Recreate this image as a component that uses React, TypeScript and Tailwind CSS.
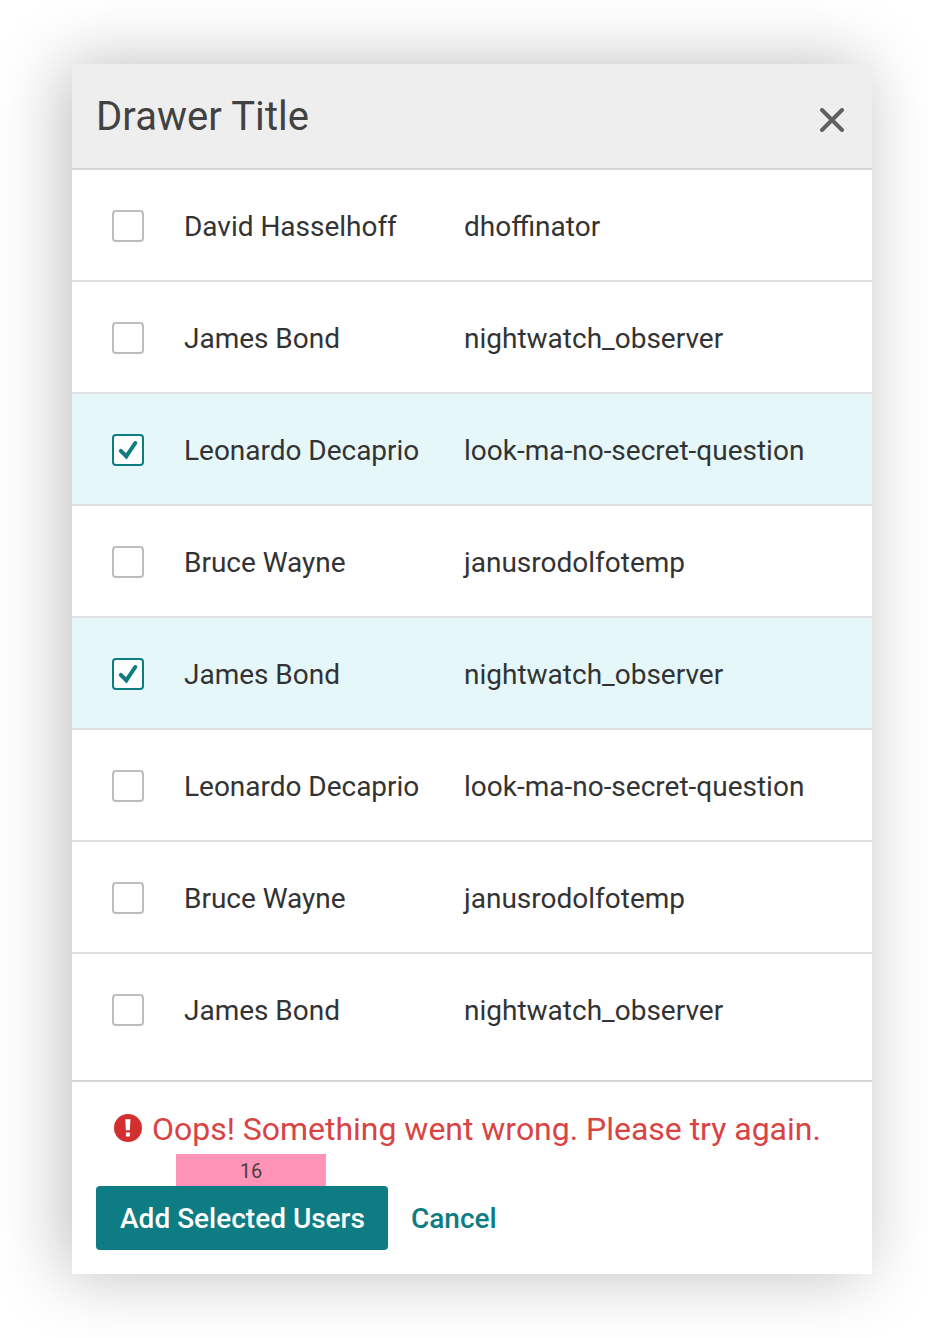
import React from "react";

type User = { name: string; handle: string; checked?: boolean };

const users: User[] = [
  { name: "David Hasselhoff", handle: "dhoffinator" },
  { name: "James Bond", handle: "nightwatch_observer" },
  { name: "Leonardo Decaprio", handle: "look-ma-no-secret-question", checked: true },
  { name: "Bruce Wayne", handle: "janusrodolfotemp" },
  { name: "James Bond", handle: "nightwatch_observer", checked: true },
  { name: "Leonardo Decaprio", handle: "look-ma-no-secret-question" },
  { name: "Bruce Wayne", handle: "janusrodolfotemp" },
  { name: "James Bond", handle: "nightwatch_observer" },
];

function Checkbox({ checked }: { checked?: boolean }) {
  return (
    <span
      role="checkbox"
      aria-checked={!!checked}
      className={`flex size-8 shrink-0 items-center justify-center rounded-[4px] border-2 bg-white ${
        checked ? "border-[#0d7c83]" : "border-[#bdbdbd]"
      }`}
    >
      {checked && (
        <svg width="28" height="28" viewBox="0 0 28 28" fill="none" stroke="#0d7c83" strokeWidth="4" strokeLinecap="round">
          <path d="M6.8 14.9 L12.3 20.3 L21.3 7" />
        </svg>
      )}
    </span>
  );
}

function Row({ user }: { user: User }) {
  return (
    <li
      className={`flex h-28 items-center border-b-2 border-[#e0e0e0] pt-[2px] pl-10 last:border-b-transparent ${
        user.checked ? "bg-[#e5f7f9]" : "bg-white"
      }`}
    >
      <Checkbox checked={user.checked} />
      <span className="ml-10 w-[280px] shrink-0 pt-[2px] text-[28px] tracking-[-0.02px] [font-variant-ligatures:common-ligatures]">{user.name}</span>
      <span className="pt-[2px] text-[28px]">{user.handle}</span>
    </li>
  );
}

export default function App() {
  return (
    <main className="h-[1338px] w-[928px] overflow-hidden bg-white px-[72px] pt-16 font-['Roboto',sans-serif] text-[#333333]">
      <section className="flex h-[1210px] w-[800px] flex-col bg-white whitespace-nowrap shadow-[-8px_0_64px_rgba(0,0,0,0.26)]">
        <header className="flex h-[106px] items-center justify-between border-b-2 border-[#d6d6d6] bg-[#eeeeee] pr-7 pl-6">
          <h1 className="pt-[2px] text-[40px] leading-[48px] tracking-[0.06px] text-[#424242]">Drawer Title</h1>
          <button aria-label="Close" className="mt-2">
            <svg width="24" height="24" viewBox="0 0 24 24" stroke="#616161" strokeWidth="4" strokeLinecap="round">
              <path d="M2 2 L22 22 M22 2 L2 22" />
            </svg>
          </button>
        </header>
        <ul className="flex-1">
          {users.map((user, i) => (
            <Row key={i} user={user} />
          ))}
        </ul>
        <footer className="h-[194px] border-t-2 border-[#d6d6d6] px-6">
          <div className="flex h-[72px] items-center pt-5 pl-[18px]">
            <svg width="28" height="28" viewBox="0 0 28 28">
              <circle cx="14" cy="14" r="14" fill="#d32f2f" />
              <path d="M11.3 5.2h5.1l-.5 11h-4.1z M11.9 18.4h4v4.2h-4z" fill="white" />
            </svg>
            <p className="ml-[10px] pt-[2px] text-[32px] tracking-[-0.02px] text-[#d84343]">Oops! Something went wrong. Please try again.</p>
          </div>
          <div className="ml-20 flex h-8 w-[150px] items-center justify-center bg-[#ff94b8] pt-[2px] text-[20px] text-[#424242]">16</div>
          <div className="flex items-center">
            <button className="h-16 w-[292px] rounded-[4px] bg-[#0d7c83] pt-[2px] pl-px text-[28px] font-medium text-white">Add Selected Users</button>
            <button className="ml-[23px] pt-[2px] text-[28px] font-medium text-[#0d7c83]">Cancel</button>
          </div>
        </footer>
      </section>
    </main>
  );
}
